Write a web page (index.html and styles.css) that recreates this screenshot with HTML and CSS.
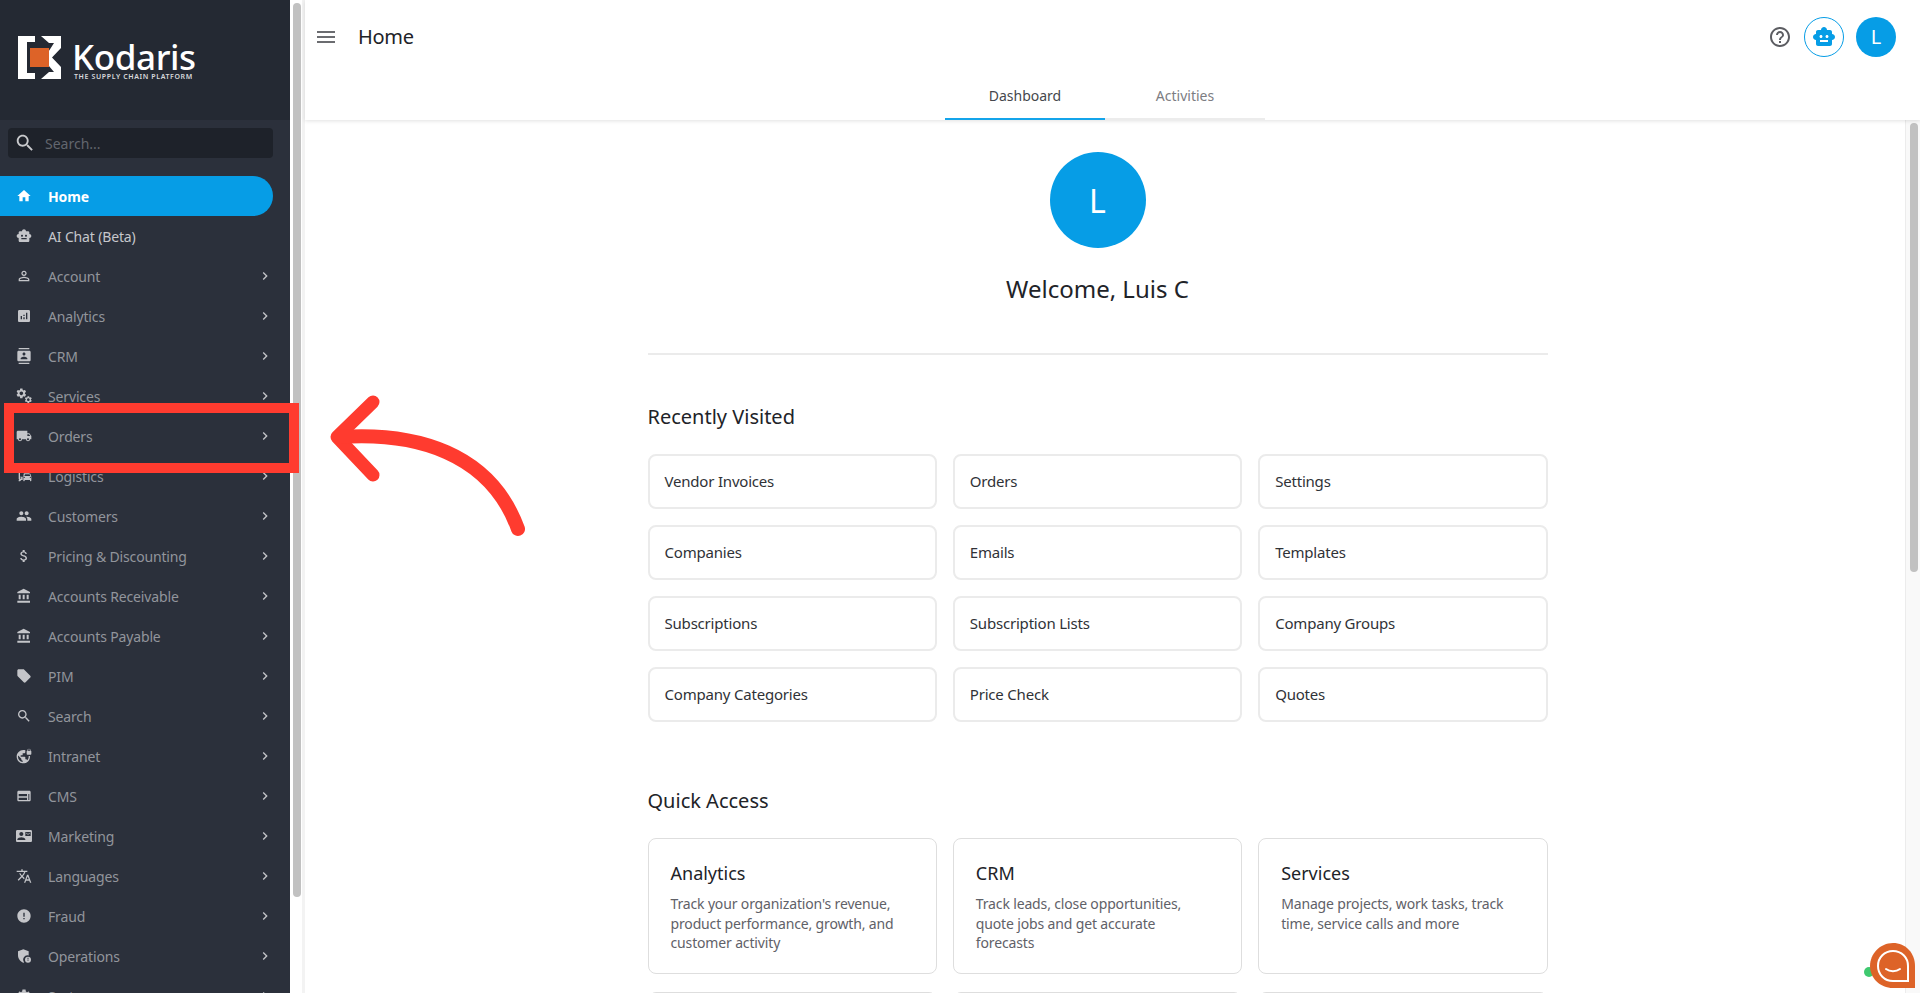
FILE: index.html
```html
<!DOCTYPE html>
<html>

<head>
    <meta charset="utf-8">
    <title>Home</title>
    <link rel="stylesheet" href="styles.css">
</head>

<body>
    <svg class="sprite" xmlns="http://www.w3.org/2000/svg">
        <symbol id="i-home" viewBox="0 0 24 24"><path d="M10 20v-6h4v6h5v-8h3L12 3 2 12h3v8z"/></symbol>
        <symbol id="i-robot" viewBox="0 0 24 24"><path d="M20 9V7c0-1.1-.9-2-2-2h-3c0-1.66-1.34-3-3-3S9 3.34 9 5H6c-1.1 0-2 .9-2 2v2c-1.66 0-3 1.34-3 3s1.34 3 3 3v4c0 1.1.9 2 2 2h12c1.1 0 2-.9 2-2v-4c1.66 0 3-1.34 3-3s-1.34-3-3-3zM7.5 11.5c0-.83.67-1.5 1.5-1.5s1.5.67 1.5 1.5S9.83 13 9 13s-1.5-.67-1.5-1.5zM16 17H8v-2h8v2zm-1-4c-.83 0-1.5-.67-1.5-1.5S14.17 10 15 10s1.5.67 1.5 1.5S15.83 13 15 13z"/></symbol>
        <symbol id="i-person" viewBox="0 0 24 24"><path d="M12 5.9c1.16 0 2.1.94 2.1 2.1s-.94 2.1-2.1 2.1S9.9 9.16 9.9 8s.94-2.1 2.1-2.1m0 9c2.97 0 6.1 1.46 6.1 2.1v1.1H5.9V17c0-.64 3.13-2.1 6.1-2.1M12 4C9.79 4 8 5.79 8 8s1.79 4 4 4 4-1.79 4-4-1.79-4-4-4zm0 9c-2.67 0-8 1.34-8 4v3h16v-3c0-2.66-5.33-4-8-4z"/></symbol>
        <symbol id="i-analytics" viewBox="0 0 24 24"><path d="M19 3H5c-1.1 0-2 .9-2 2v14c0 1.1.9 2 2 2h14c1.1 0 2-.9 2-2V5c0-1.1-.9-2-2-2zM9 17H7v-5h2v5zm4 0h-2v-3h2v3zm0-5h-2v-2h2v2zm4 5h-2V7h2v10z"/></symbol>
        <symbol id="i-contacts" viewBox="0 0 24 24"><path d="M20 0H4v2h16V0zM4 24h16v-2H4v2zM20 4H4c-1.1 0-2 .9-2 2v12c0 1.1.9 2 2 2h16c1.1 0 2-.9 2-2V6c0-1.1-.9-2-2-2zm-8 2.75c1.24 0 2.25 1.01 2.25 2.25s-1.01 2.25-2.25 2.25S9.75 10.24 9.75 9 10.76 6.75 12 6.75zM17 17H7v-1.5c0-1.67 3.33-2.5 5-2.5s5 .83 5 2.5V17z"/></symbol>
        <symbol id="i-gear" viewBox="0 0 24 24"><path d="M19.14 12.94c.04-.3.06-.61.06-.94 0-.32-.02-.64-.07-.94l2.03-1.58c.18-.14.23-.41.12-.61l-1.92-3.32c-.12-.22-.37-.29-.59-.22l-2.39.96c-.5-.38-1.03-.7-1.62-.94l-.36-2.54c-.04-.24-.24-.41-.48-.41h-3.84c-.24 0-.43.17-.47.41l-.36 2.54c-.59.24-1.13.57-1.62.94l-2.39-.96c-.22-.08-.47 0-.59.22L2.74 8.87c-.12.21-.08.47.12.61l2.03 1.58c-.05.3-.09.63-.09.94s.02.64.07.94l-2.03 1.58c-.18.14-.23.41-.12.61l1.92 3.32c.12.22.37.29.59.22l2.39-.96c.5.38 1.03.7 1.62.94l.36 2.54c.05.24.24.41.48.41h3.84c.24 0 .44-.17.47-.41l.36-2.54c.59-.24 1.13-.56 1.62-.94l2.39.96c.22.08.47 0 .59-.22l1.92-3.32c.12-.22.07-.47-.12-.61l-2.01-1.58zM12 15.6c-1.98 0-3.6-1.62-3.6-3.6s1.62-3.6 3.6-3.6 3.6 1.62 3.6 3.6-1.62 3.6-3.6 3.6z"/></symbol>
        <symbol id="i-services" viewBox="0 0 24 24"><use href="#i-gear" x="-1" y="-1" width="18" height="18"/><use href="#i-gear" x="12" y="11" width="13" height="13"/></symbol>
        <symbol id="i-truck" viewBox="0 0 24 24"><path d="M20 8h-3V4H3c-1.1 0-2 .9-2 2v11h2c0 1.66 1.34 3 3 3s3-1.34 3-3h6c0 1.66 1.34 3 3 3s3-1.34 3-3h2v-5l-3-4zM6 18.5c-.83 0-1.5-.67-1.5-1.5s.67-1.5 1.5-1.5 1.5.67 1.5 1.5-.67 1.5-1.5 1.5zm13.5-9l1.96 2.5H17V9.5h2.5zm-1.5 9c-.83 0-1.5-.67-1.5-1.5s.67-1.5 1.5-1.5 1.5.67 1.5 1.5-.67 1.5-1.5 1.5z"/></symbol>
        <symbol id="i-commute" viewBox="0 0 24 24"><path d="M4 16V6c0-2.21 1.79-4 4-4h5c2.21 0 4 1.79 4 4v1h-2V4H6v9h4v5H8l-2 2H4v-2l2-.0c-1.1 0-2-.9-2-2zm3 0c.55 0 1-.45 1-1s-.45-1-1-1-1 .45-1 1 .45 1 1 1zM20.6 8.7c-.14-.4-.52-.7-.97-.7h-7.2c-.46 0-.83.3-.98.7L11 13v6.2c0 .4.34.8.75.8h.5c.41 0 .75-.4.75-.8V18h8v1.2c0 .4.34.8.75.8h.5c.41 0 .75-.4.75-.8V13l-1.4-4.3zM12.4 15c-.55 0-1-.45-1-1s.45-1 1-1 1 .45 1 1-.45 1-1 1zm9.2 0c-.55 0-1-.45-1-1s.45-1 1-1 1 .45 1 1-.45 1-1 1zM12.5 12l1-2.5h7l1 2.5h-9z"/></symbol>
        <symbol id="i-people" viewBox="0 0 24 24"><path d="M16 11c1.66 0 2.99-1.34 2.99-3S17.66 5 16 5c-1.66 0-3 1.34-3 3s1.34 3 3 3zm-8 0c1.66 0 2.99-1.34 2.99-3S9.66 5 8 5C6.34 5 5 6.34 5 8s1.34 3 3 3zm0 2c-2.33 0-7 1.17-7 3.5V19h14v-2.5c0-2.33-4.67-3.5-7-3.5zm8 0c-.29 0-.62.02-.97.05 1.16.84 1.97 1.97 1.97 3.45V19h6v-2.5c0-2.33-4.67-3.5-7-3.5z"/></symbol>
        <symbol id="i-money" viewBox="0 0 24 24"><path d="M11.8 10.9c-2.27-.59-3-1.2-3-2.15 0-1.09 1.01-1.85 2.7-1.85 1.78 0 2.44.85 2.5 2.1h2.21c-.07-1.72-1.12-3.3-3.21-3.81V3h-3v2.16c-1.94.42-3.5 1.68-3.5 3.61 0 2.31 1.91 3.46 4.7 4.13 2.5.6 3 1.48 3 2.41 0 .69-.49 1.79-2.7 1.79-2.06 0-2.87-.92-2.98-2.1h-2.2c.12 2.19 1.76 3.42 3.68 3.83V21h3v-2.15c1.95-.37 3.5-1.5 3.5-3.55 0-2.84-2.43-3.81-4.7-4.4z"/></symbol>
        <symbol id="i-bank" viewBox="0 0 24 24"><path d="M4 10v7h3v-7H4zm6 0v7h3v-7h-3zM2 22h19v-3H2v3zm14-12v7h3v-7h-3zm-4.5-9L2 6v2h19V6l-9.5-5z"/></symbol>
        <symbol id="i-tag" viewBox="0 0 24 24"><path d="M21.41 11.58l-9-9C12.05 2.22 11.55 2 11 2H4c-1.1 0-2 .9-2 2v7c0 .55.22 1.05.59 1.42l9 9c.36.36.86.58 1.41.58.55 0 1.05-.22 1.41-.59l7-7c.37-.36.59-.86.59-1.41 0-.55-.23-1.06-.59-1.42z"/></symbol>
        <symbol id="i-search" viewBox="0 0 24 24"><path d="M15.5 14h-.79l-.28-.27C15.41 12.59 16 11.11 16 9.5 16 5.91 13.09 3 9.5 3S3 5.91 3 9.5 5.91 16 9.5 16c1.61 0 3.09-.59 4.23-1.57l.27.28v.79l5 4.99L20.49 19l-4.99-5zm-6 0C7.01 14 5 11.99 5 9.5S7.01 5 9.5 5 14 7.01 14 9.5 11.99 14 9.5 14z"/></symbol>
        <symbol id="i-vpn" viewBox="0 0 24 24"><path d="M22 4v-.5C22 2.12 20.88 1 19.5 1S17 2.12 17 3.5V4c-.55 0-1 .45-1 1v4c0 .55.45 1 1 1h5c.55 0 1-.45 1-1V5c0-.55-.45-1-1-1zm-.8 0h-3.4v-.5c0-.94.76-1.7 1.7-1.7s1.7.76 1.7 1.7V4zm-2.28 8c.04.33.08.66.08 1 0 2.08-.8 3.97-2.1 5.39-.26-.81-1-1.39-1.9-1.39h-1v-3c0-.55-.45-1-1-1H7v-2h2c.55 0 1-.45 1-1V8h2c1.1 0 2-.9 2-2V3.46c-.95-.3-1.95-.46-3-.46C5.48 3 1 7.48 1 13s4.48 10 10 10 10-4.48 10-10c0-.34-.02-.67-.05-1h-2.03zM10 20.93c-3.95-.49-7-3.85-7-7.93 0-.62.08-1.21.21-1.79L8 16v1c0 1.1.9 2 2 2v1.93z"/></symbol>
        <symbol id="i-web" viewBox="0 0 24 24"><path d="M20 4H4c-1.1 0-2 .9-2 2v12c0 1.1.9 2 2 2h16c1.1 0 2-.9 2-2V6c0-1.1-.9-2-2-2zM4 9h12.5v3.5H4V9zm0 5.5h12.5V18H4v-3.5zM20 18h-1.5V9H20v9z"/></symbol>
        <symbol id="i-mail" viewBox="0 0 24 24"><path d="M21 8V7l-3 2-3-2v1l3 2 3-2zm1-5H2C.9 3 0 3.9 0 5v14c0 1.1.9 2 2 2h20c1.1 0 1.99-.9 1.99-2L24 5c0-1.1-.9-2-2-2zM8 6c1.66 0 3 1.34 3 3s-1.34 3-3 3-3-1.34-3-3 1.34-3 3-3zm6 12H2v-1c0-2 4-3.1 6-3.1s6 1.1 6 3.1v1zm8-6h-8V6h8v6z"/></symbol>
        <symbol id="i-translate" viewBox="0 0 24 24"><path d="M12.87 15.07l-2.54-2.51.03-.03c1.74-1.94 2.98-4.17 3.71-6.53H17V4h-7V2H8v2H1v1.99h11.17C11.5 7.92 10.44 9.75 9 11.35 8.07 10.32 7.3 9.19 6.69 8h-2c.73 1.63 1.73 3.17 2.98 4.56l-5.09 5.02L4 19l5-5 3.11 3.11.76-2.04zM18.5 10h-2L12 22h2l1.12-3h4.75L21 22h2l-4.5-12zm-2.62 7l1.62-4.33L19.12 17h-3.24z"/></symbol>
        <symbol id="i-error" viewBox="0 0 24 24"><path d="M12 2C6.48 2 2 6.48 2 12s4.48 10 10 10 10-4.48 10-10S17.52 2 12 2zm1 15h-2v-2h2v2zm0-4h-2V7h2v6z"/></symbol>
        <symbol id="i-shield" viewBox="0 0 24 24"><path d="M11 2L3 5v6c0 5 3.4 9.7 8 11l1.300-.4A6.500 6.500 0 0 1 19 11.200V5l-8-3zm7 11a4.500 4.500 0 1 0 0 9 4.500 4.500 0 0 0 0-9zm.7 6.500h-1.400v-1.300h1.400v1.300zm0-2.300h-1.400v-2.700h1.400v2.700z"/></symbol>
        <symbol id="i-chevron" viewBox="0 0 24 24"><path d="M10 6L8.590 7.410 13.170 12l-4.580 4.590L10 18l6-6z"/></symbol>
        <symbol id="i-help" viewBox="0 0 24 24"><path d="M11 18h2v-2h-2v2zm1-16C6.480 2 2 6.480 2 12s4.480 10 10 10 10-4.480 10-10S17.520 2 12 2zm0 18c-4.410 0-8-3.590-8-8s3.590-8 8-8 8 3.590 8 8-3.590 8-8 8zm0-14c-2.210 0-4 1.790-4 4h2c0-1.100.9-2 2-2s2 .9 2 2c0 2-3 1.750-3 5h2c0-2.250 3-2.500 3-5 0-2.210-1.790-4-4-4z"/></symbol>
    </svg>

    <aside class="sidebar">
        <div class="brand">
            <svg class="brand-mark" viewBox="0 0 43 43">
                <path fill="#fff" d="M0 0h17v6H9v31h8v6H0z"/>
                <path fill="#fff" d="M23 0h20v12l-9 9.500 9 9.500v12H23l8-7h5l-8-9.500v-7L36 7h-5z"/>
                <rect x="10" y="10" width="21" height="23" fill="#242933"/>
                <rect x="12" y="12" width="19" height="19" fill="#dd6328"/>
            </svg>
            <div class="brand-text">
                <div class="brand-name">Kodaris</div>
                <div class="brand-tag">THE SUPPLY CHAIN PLATFORM</div>
            </div>
        </div>

        <div class="side-search">
            <svg class="search-icon"><use href="#i-search"/></svg>
            <span>Search...</span>
        </div>

        <nav class="side-nav">
            <a class="nav-item active"><svg class="nav-icon"><use href="#i-home"/></svg><span>Home</span></a>
            <a class="nav-item bright"><svg class="nav-icon"><use href="#i-robot"/></svg><span>AI Chat (Beta)</span></a>
            <a class="nav-item"><svg class="nav-icon"><use href="#i-person"/></svg><span>Account</span><svg class="nav-arrow"><use href="#i-chevron"/></svg></a>
            <a class="nav-item"><svg class="nav-icon"><use href="#i-analytics"/></svg><span>Analytics</span><svg class="nav-arrow"><use href="#i-chevron"/></svg></a>
            <a class="nav-item"><svg class="nav-icon"><use href="#i-contacts"/></svg><span>CRM</span><svg class="nav-arrow"><use href="#i-chevron"/></svg></a>
            <a class="nav-item"><svg class="nav-icon"><use href="#i-services"/></svg><span>Services</span><svg class="nav-arrow"><use href="#i-chevron"/></svg></a>
            <a class="nav-item"><svg class="nav-icon"><use href="#i-truck"/></svg><span>Orders</span><svg class="nav-arrow"><use href="#i-chevron"/></svg></a>
            <a class="nav-item"><svg class="nav-icon"><use href="#i-commute"/></svg><span>Logistics</span><svg class="nav-arrow"><use href="#i-chevron"/></svg></a>
            <a class="nav-item"><svg class="nav-icon"><use href="#i-people"/></svg><span>Customers</span><svg class="nav-arrow"><use href="#i-chevron"/></svg></a>
            <a class="nav-item"><svg class="nav-icon"><use href="#i-money"/></svg><span>Pricing &amp; Discounting</span><svg class="nav-arrow"><use href="#i-chevron"/></svg></a>
            <a class="nav-item"><svg class="nav-icon"><use href="#i-bank"/></svg><span>Accounts Receivable</span><svg class="nav-arrow"><use href="#i-chevron"/></svg></a>
            <a class="nav-item"><svg class="nav-icon"><use href="#i-bank"/></svg><span>Accounts Payable</span><svg class="nav-arrow"><use href="#i-chevron"/></svg></a>
            <a class="nav-item"><svg class="nav-icon"><use href="#i-tag"/></svg><span>PIM</span><svg class="nav-arrow"><use href="#i-chevron"/></svg></a>
            <a class="nav-item"><svg class="nav-icon"><use href="#i-search"/></svg><span>Search</span><svg class="nav-arrow"><use href="#i-chevron"/></svg></a>
            <a class="nav-item"><svg class="nav-icon"><use href="#i-vpn"/></svg><span>Intranet</span><svg class="nav-arrow"><use href="#i-chevron"/></svg></a>
            <a class="nav-item"><svg class="nav-icon"><use href="#i-web"/></svg><span>CMS</span><svg class="nav-arrow"><use href="#i-chevron"/></svg></a>
            <a class="nav-item"><svg class="nav-icon"><use href="#i-mail"/></svg><span>Marketing</span><svg class="nav-arrow"><use href="#i-chevron"/></svg></a>
            <a class="nav-item"><svg class="nav-icon"><use href="#i-translate"/></svg><span>Languages</span><svg class="nav-arrow"><use href="#i-chevron"/></svg></a>
            <a class="nav-item"><svg class="nav-icon"><use href="#i-error"/></svg><span>Fraud</span><svg class="nav-arrow"><use href="#i-chevron"/></svg></a>
            <a class="nav-item"><svg class="nav-icon"><use href="#i-shield"/></svg><span>Operations</span><svg class="nav-arrow"><use href="#i-chevron"/></svg></a>
            <a class="nav-item"><svg class="nav-icon"><use href="#i-gear"/></svg><span>System</span><svg class="nav-arrow"><use href="#i-chevron"/></svg></a>
        </nav>
    </aside>

    <div class="side-scroll"><div class="side-thumb"></div></div>

    <div class="main">
        <header class="topbar">
            <div class="topbar-row">
                <div class="menu-btn"><i></i><i></i><i></i></div>
                <div class="page-title">Home</div>
                <div class="topbar-actions">
                    <svg class="help-icon"><use href="#i-help"/></svg>
                    <div class="bot-btn"><svg><use href="#i-robot"/></svg></div>
                    <div class="avatar-small">L</div>
                </div>
            </div>
            <div class="tabs">
                <div class="tab current">Dashboard</div>
                <div class="tab">Activities</div>
            </div>
        </header>

        <div class="body-row">
            <main class="content">
                <div class="content-inner">
                    <div class="profile">
                        <div class="avatar-big">L</div>
                        <div class="welcome">Welcome, Luis C</div>
                    </div>

                    <h2 class="section-title first">Recently Visited</h2>
                    <div class="link-grid">
                        <div class="link-box">Vendor Invoices</div>
                        <div class="link-box">Orders</div>
                        <div class="link-box">Settings</div>
                        <div class="link-box">Companies</div>
                        <div class="link-box">Emails</div>
                        <div class="link-box">Templates</div>
                        <div class="link-box">Subscriptions</div>
                        <div class="link-box">Subscription Lists</div>
                        <div class="link-box">Company Groups</div>
                        <div class="link-box">Company Categories</div>
                        <div class="link-box">Price Check</div>
                        <div class="link-box">Quotes</div>
                    </div>

                    <h2 class="section-title">Quick Access</h2>
                    <div class="card-grid">
                        <div class="card">
                            <h3>Analytics</h3>
                            <p>Track your organization's revenue, product performance, growth, and customer activity</p>
                        </div>
                        <div class="card">
                            <h3>CRM</h3>
                            <p>Track leads, close opportunities, quote jobs and get accurate forecasts</p>
                        </div>
                        <div class="card">
                            <h3>Services</h3>
                            <p>Manage projects, work tasks, track time, service calls and more</p>
                        </div>
                        <div class="card"></div>
                        <div class="card"></div>
                        <div class="card"></div>
                    </div>
                </div>
            </main>
            <div class="main-scroll"><div class="main-thumb"></div></div>
        </div>
    </div>

    <!-- chat widget -->
    <svg class="chat-widget" viewBox="0 0 60 60">
        <circle cx="9" cy="39" r="6.500" fill="#fff"/>
        <circle cx="9" cy="39" r="5" fill="#3fc96f"/>
        <path fill="#dd6328" d="M33 10c12.700 0 22 10 22 23v22H33C20 55 10 45 10 33s10-23 23-23z"/>
        <path fill="none" stroke="#fff" stroke-width="2" d="M33 18c8.500 0 15 6.500 15 15v15H33c-8.500 0-15-6.500-15-15s6.500-15 15-15z"/>
        <path fill="none" stroke="#fff" stroke-width="2" stroke-linecap="round" d="M26 36c4 3 10 3 14 0"/>
    </svg>

    <!-- annotation -->
    <div class="mark-box"></div>
    <svg class="mark-arrow" viewBox="0 0 240 170">
        <path fill="none" stroke="#ff3b2f" stroke-width="13" stroke-linecap="round" stroke-linejoin="round" d="M73 22L37 57l36 38"/>
        <path fill="none" stroke="#ff3b2f" stroke-width="14" stroke-linecap="round" d="M40 57c75-5 150 15 178 92"/>
    </svg>
</body>

</html>
```

FILE: styles.css
```css
* {
    box-sizing: border-box;
}

html,
body {
    height: 100%;
}

body {
    margin: 0;
    display: flex;
    height: 993px;
    overflow: hidden;
    background-color: white;
    font-family: "Noto Sans", Arial, sans-serif;
    color: #212328;
}

.sprite {
    display: none;
}

/* sidebar */
.sidebar {
    width: 290px;
    flex-shrink: 0;
    background-color: #2b303b;
    overflow: hidden;
}

.brand {
    height: 120px;
    background-color: #242933;
    display: flex;
    align-items: flex-start;
    padding: 36px 0 0 18px;
}

.brand-mark {
    width: 43px;
    height: 43px;
    flex-shrink: 0;
}

.brand-text {
    margin-left: 11px;
    color: white;
}

.brand-name {
    font-size: 35px;
    line-height: 32px;
    margin-top: 5px;
    font-weight: 500;
    letter-spacing: -0.4px;
}

.brand-tag {
    font-size: 7px;
    line-height: 8px;
    font-weight: 600;
    letter-spacing: 0.62px;
    color: #d8d9dc;
    white-space: nowrap;
    margin: 0 0 0 2px;
}

.side-search {
    height: 30px;
    margin: 8px 17px 0 8px;
    background-color: #1e222a;
    border-radius: 4px;
    display: flex;
    align-items: center;
    padding-left: 6px;
    color: #62666e;
    font-size: 14px;
}

.search-icon {
    width: 22px;
    height: 22px;
    fill: #c9cacd;
    margin-right: 9px;
}

.side-nav {
    margin-top: 18px;
}

.nav-item {
    display: flex;
    align-items: center;
    height: 40px;
    padding: 0 17px 0 16px;
    color: #92959c;
    font-size: 14px;
    letter-spacing: -0.15px;
    white-space: nowrap;
}

.nav-icon {
    width: 16px;
    height: 16px;
    fill: #c4c5c9;
    flex-shrink: 0;
    margin-right: 16px;
}

.nav-arrow {
    width: 16px;
    height: 16px;
    fill: #c4c5c9;
    margin-left: auto;
    margin-right: 0;
}

.nav-item.active {
    width: 273px;
    background-color: #069de6;
    border-radius: 0 20px 20px 0;
    color: white;
    font-weight: 700;
}

.nav-item.active .nav-icon {
    fill: white;
}

.nav-item.bright {
    color: #c6c7cb;
}

/* scrollbars */
.side-scroll {
    width: 15px;
    flex-shrink: 0;
    padding: 3px 4px 0 3px;
    background-color: white;
    border-right: 3px solid #f3f3f3;
}

.side-thumb {
    width: 8px;
    height: 894px;
    background-color: #c1c1c1;
    border-radius: 4px;
}

.main-scroll {
    width: 15px;
    flex-shrink: 0;
    padding: 3px 3px 0 4px;
    background-color: #f9f9f9;
    border-left: 1px solid #ececec;
}

.main-thumb {
    width: 8px;
    height: 449px;
    background-color: #c1c1c1;
    border-radius: 4px;
}

/* top */
.main {
    flex: 1;
    min-width: 0;
    display: flex;
    flex-direction: column;
}

.topbar {
    height: 120px;
    flex-shrink: 0;
    background-color: white;
    box-shadow: 0 1px 4px rgba(0, 0, 0, 0.12);
    position: relative;
}

.topbar-row {
    display: flex;
    align-items: center;
    height: 73px;
    padding: 0 24px 0 12px;
}

.menu-btn {
    width: 18px;
    margin-right: 23px;
    display: flex;
    flex-direction: column;
    gap: 3px;
}

.menu-btn i {
    display: block;
    height: 2px;
    background-color: #6b6c70;
}

.page-title {
    font-size: 20px;
    letter-spacing: -0.3px;
}

.topbar-actions {
    margin-left: auto;
    display: flex;
    align-items: center;
}

.help-icon {
    width: 24px;
    height: 24px;
    fill: #5c5d62;
    margin-right: 12px;
}

.bot-btn {
    width: 40px;
    height: 40px;
    border: 1px solid #069de6;
    border-radius: 50%;
    display: flex;
    align-items: center;
    justify-content: center;
    margin-right: 12px;
}

.bot-btn svg {
    width: 24px;
    height: 24px;
    fill: #069de6;
}

.avatar-small {
    width: 40px;
    height: 40px;
    border-radius: 50%;
    background-color: #069de6;
    color: white;
    font-size: 20px;
    display: flex;
    align-items: center;
    justify-content: center;
}

.tabs {
    display: flex;
    justify-content: center;
    height: 47px;
    padding-right: 15px;
}

.tab {
    width: 160px;
    display: flex;
    align-items: center;
    justify-content: center;
    padding-bottom: 1px;
    font-size: 14px;
    font-weight: 400;
    color: #7c7d82;
    border-bottom: 2px solid #ececec;
}

.tab.current {
    color: #45474c;
    border-bottom-color: #14a4ea;
}

/* content */
.body-row {
    flex: 1;
    min-height: 0;
    display: flex;
}

.content {
    flex: 1;
    min-width: 0;
    overflow: hidden;
    display: flex;
    justify-content: center;
    padding-right: 15px;
}

.content-inner {
    width: 900px;
    flex-shrink: 0;
}

.profile {
    display: flex;
    flex-direction: column;
    align-items: center;
    padding-top: 32px;
    height: 235px;
    border-bottom: 2px solid #ebebeb;
}

.avatar-big {
    width: 96px;
    height: 96px;
    border-radius: 50%;
    background-color: #069de6;
    color: white;
    font-size: 32px;
    display: flex;
    align-items: center;
    justify-content: center;
}

.welcome {
    margin-top: 25px;
    font-size: 24px;
    line-height: 32px;
}

.section-title {
    margin: 65px 0 23px;
    font-size: 20px;
    line-height: 28px;
    font-weight: 400;
}

.section-title.first {
    margin-top: 48px;
}

.link-grid,
.card-grid {
    display: grid;
    grid-template-columns: repeat(3, 1fr);
    column-gap: 16px;
}

.link-grid {
    row-gap: 16px;
}

.card-grid {
    row-gap: 18px;
}

.link-box {
    height: 55px;
    border: 2px solid #ebebeb;
    border-radius: 8px;
    display: flex;
    align-items: center;
    padding: 0 0 1px 15px;
    font-size: 15px;
    letter-spacing: -0.2px;
    color: #303237;
}

.card {
    height: 136px;
    border: 1px solid #dedede;
    border-radius: 8px;
    padding: 22px 22px 0;
}

.card h3 {
    margin: 0 0 9px;
    font-size: 18px;
    line-height: 24px;
    font-weight: 400;
}

.card p {
    margin: 0;
    max-width: 232px;
    font-size: 14px;
    line-height: 19.5px;
    letter-spacing: -0.15px;
    color: #5f6168;
}

/* overlays */
.chat-widget {
    position: absolute;
    left: 1860px;
    top: 933px;
    width: 60px;
    height: 60px;
}

.mark-box {
    position: absolute;
    left: 4px;
    top: 403px;
    width: 295px;
    height: 70px;
    border: 10px solid #ff3b2f;
}

.mark-arrow {
    position: absolute;
    left: 300px;
    top: 380px;
    width: 240px;
    height: 170px;
}
```
